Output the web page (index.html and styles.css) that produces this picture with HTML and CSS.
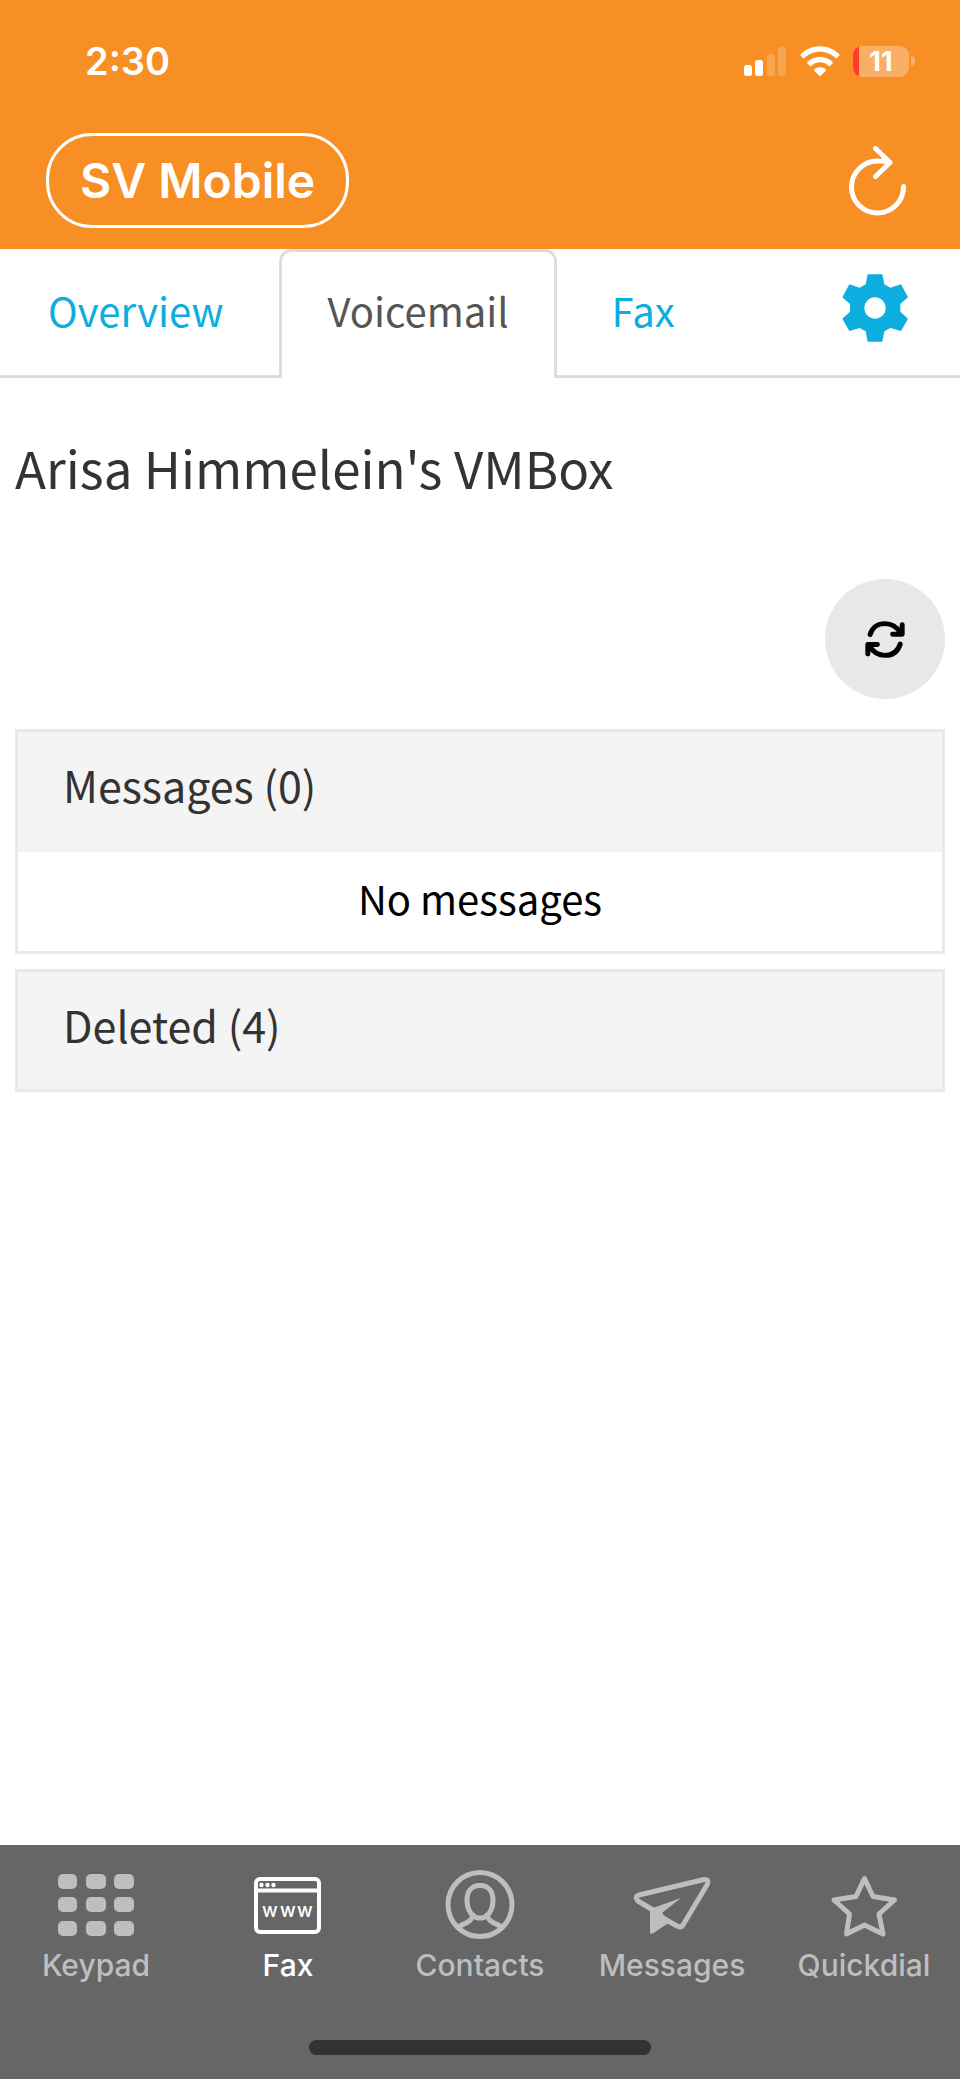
FILE: index.html
```html
<!DOCTYPE html>
<html lang="en">
<head>
<meta charset="utf-8">
<meta name="viewport" content="width=device-width, initial-scale=1">
<title>SV Mobile</title>
<link rel="stylesheet" href="styles.css">
</head>
<body>
<header class="top">
  <div class="status">
    <span class="clock">2:30</span>
    <div class="indicators">
      <svg class="signal" viewBox="0 0 43 30" aria-hidden="true">
        <rect x="0" y="19" width="8" height="11" rx="2.5"/>
        <rect x="11" y="14" width="8" height="16" rx="2.5"/>
        <rect class="dim" x="23" y="8" width="8" height="22" rx="2.5"/>
        <rect class="dim" x="34" y="1" width="8" height="29" rx="2.5"/>
      </svg>
      <svg class="wifi" viewBox="0 0 120 90" aria-hidden="true">
        <path d="M60 1C37 1 16 10 2 25Q0 27 2 29L9 36Q11 38 13 36C25 24 42 17 60 17S95 24 107 36Q109 38 111 36L118 29Q120 27 118 25C104 10 83 1 60 1Z"/>
        <path d="M60 33C45 33 32 38 22 48Q20 50 22 52L30 60Q32 62 34 60C41 53 50 49 60 49S79 53 86 60Q88 62 90 60L98 52Q100 50 98 48C88 38 75 33 60 33Z"/>
        <path d="M60 64C53 64 47 66 43 70Q41 72 43 74L58 89Q60 91 62 89L77 74Q79 72 77 70C73 66 67 64 60 64Z"/>
      </svg>
      <div class="battery"><span class="battery-body">11</span><span class="battery-cap"></span></div>
    </div>
  </div>
  <div class="titlebar">
    <button class="brand" type="button">SV Mobile</button>
    <button class="reload" type="button" aria-label="Reload">
      <svg viewBox="0 0 57 70" aria-hidden="true"><path d="M54.500 40.500A26 26 0 1 1 28.500 15Q36 15 41 16.500M26.500 2.500L41 16.500L26.500 30.500"/></svg>
    </button>
  </div>
</header>

<nav class="tabs">
  <a class="tab tab-first" href="#overview">Overview</a>
  <a class="tab tab-active" href="#voicemail" aria-current="page">Voicemail</a>
  <a class="tab tab-last" href="#fax">Fax</a>
  <div class="tab-tools">
    <button class="gear" type="button" aria-label="Settings">
      <svg viewBox="0 0 198 204" aria-hidden="true"><path fill-rule="evenodd" d="M77 1H121L127 31L145 41L177 31L198 70L175 90V113L198 134L177 171L145 162L127 172L121 203H77L71 172L53 162L22 171L1 134L24 113V90L1 70L22 31L53 41L71 31ZM99 70A32 32 0 1 0 99 134A32 32 0 1 0 99 70Z"/></svg>
    </button>
  </div>
</nav>

<main class="content">
  <h1 class="box-name">Arisa Himmelein's VMBox</h1>
  <div class="actions">
    <button class="sync" type="button" aria-label="Refresh messages">
      <svg viewBox="0 0 120 112" aria-hidden="true">
        <path class="line" d="M15 41C21 20 38 8 60 8C82 8 97 20 107 36M112 11V40H83M106 70C99 92 82 104 60 104C38 104 23 92 13 76M8 100V71H37"/>
        <path d="M112 18V40H90ZM8 93V71H30Z"/>
      </svg>
    </button>
  </div>
  <section class="panel">
    <h2 class="panel-title"><button class="panel-toggle" type="button" aria-expanded="true">Messages (0)</button></h2>
    <p class="panel-body">No messages</p>
  </section>
  <section class="panel">
    <h2 class="panel-title"><button class="panel-toggle" type="button" aria-expanded="false">Deleted (4)</button></h2>
  </section>
</main>

<footer class="bottom">
  <nav class="dock">
    <a class="dock-item" href="#keypad">
      <svg class="dock-icon" viewBox="0 0 78 70" aria-hidden="true">
        <rect x="1" y="5" width="19" height="15" rx="5"/><rect x="29" y="5" width="20" height="15" rx="5"/><rect x="57" y="5" width="20" height="15" rx="5"/>
        <rect x="1" y="28" width="19" height="15" rx="5"/><rect x="29" y="28" width="20" height="15" rx="5"/><rect x="57" y="28" width="20" height="15" rx="5"/>
        <rect x="1" y="52" width="19" height="15" rx="5"/><rect x="29" y="52" width="20" height="15" rx="5"/><rect x="57" y="52" width="20" height="15" rx="5"/>
      </svg>
      Keypad
    </a>
    <a class="dock-item dock-current" href="#fax" aria-current="page">
      <svg class="dock-icon" viewBox="0 0 78 70" aria-hidden="true">
        <rect class="line thin" x="7" y="10" width="63" height="53" rx="4"/>
        <path class="line thin" d="M7 21.500H70"/>
        <circle cx="12.500" cy="16" r="2.200"/><circle cx="18.500" cy="16" r="2.200"/><circle cx="24.500" cy="16" r="2.200"/>
        <text class="www" x="21 39 56" y="48">www</text>
      </svg>
      Fax
    </a>
    <a class="dock-item" href="#contacts">
      <svg class="dock-icon" viewBox="0 0 78 70" aria-hidden="true">
        <circle class="line" cx="39" cy="35.500" r="32"/>
        <path class="line" d="M39 16.500C30 16.500 26 23 26 31C26 41 31 49 39 49S52 41 52 31C52 23 48 16.500 39 16.500ZM32 46C31 53 24 54 17 58M46 46C47 53 54 54 61 58"/>
      </svg>
      Contacts
    </a>
    <a class="dock-item" href="#messages">
      <svg class="dock-icon" viewBox="0 0 78 70" aria-hidden="true">
        <path class="line" d="M20 41L5 32Q1 28 6 26L71 10.500Q76 10 74.500 15L50 56Q48 59 44 57L30 49"/>
        <path d="M17 40L48 29L29 44L37 53L19 65Q17 65 17 63Z"/>
      </svg>
      Messages
    </a>
    <a class="dock-item" href="#quickdial">
      <svg class="dock-icon" viewBox="0 0 78 70" aria-hidden="true">
        <path class="line" d="M39.500 9.500L48 27.500L69.500 31L54 45L58 65L39.500 56L21.500 65L24.500 45L9 31L31 27.500Z"/>
      </svg>
      Quickdial
    </a>
  </nav>
  <div class="home-bar"></div>
</footer>
</body>
</html>
```
FILE: styles.css
```css
* {
  box-sizing: border-box;
}

body {
  margin: 0;
  min-height: 100vh;
  display: flex;
  flex-direction: column;
  background: #fff;
  font-family: "Noto Sans CJK SC", "Noto Sans", sans-serif;
  font-size: 40px;
}

button {
  margin: 0;
  padding: 0;
  border: 0;
  background: none;
  font: inherit;
  color: inherit;
}

svg {
  display: block;
  fill: currentColor;
}

a {
  text-decoration: none;
}

.line {
  fill: none;
  stroke: currentColor;
  stroke-width: 5;
  stroke-linecap: round;
  stroke-linejoin: round;
}

.thin {
  stroke-width: 4;
}

/* Orange header */
.top {
  padding: 36px 45px 21px 46px;
  background: #f78f24;
  color: #fff;
  font-family: Inter, sans-serif;
  font-weight: 600;
}

.status {
  display: flex;
  align-items: center;
  justify-content: space-between;
  height: 50px;
  padding-left: 39px;
  font-size: 38px;
}

.indicators {
  display: flex;
  align-items: center;
  gap: 13px;
}

.signal {
  width: 43px;
  height: 30px;
}

.dim {
  opacity: 0.2;
}

.wifi {
  width: 40px;
  height: 30px;
}

.battery {
  display: flex;
  align-items: center;
  gap: 2px;
}

.battery-body {
  width: 56px;
  height: 31px;
  border-radius: 9px;
  background: linear-gradient(to right, #ff3b30 6px, #fab064 6px);
  font-size: 27px;
  font-weight: 700;
  line-height: 31px;
  text-align: center;
}

.battery-cap {
  width: 4px;
  height: 10px;
  border-radius: 0 4px 4px 0;
  background: #fab064;
}

.titlebar {
  display: flex;
  align-items: center;
  justify-content: space-between;
  margin-top: 47px;
  padding-right: 9px;
}

.brand {
  height: 95px;
  padding: 0 31px;
  border: 3px solid #fff;
  border-radius: 46px;
  font-size: 48px;
}

.reload svg {
  width: 57px;
  height: 70px;
  fill: none;
  stroke: currentColor;
  stroke-width: 5;
  stroke-linecap: round;
  stroke-linejoin: round;
}

/* Tabs */
.tabs {
  display: flex;
  height: 129px;
}

.tab {
  padding: 32px 45px 0 55px;
  border-bottom: 3px solid #ddd;
  line-height: 58px;
  color: #0caee0;
}

.tab-first {
  padding: 32px 56px 0 48px;
}

.tab-active {
  padding: 29px 45px 0;
  border: 3px solid #ddd;
  border-bottom: 0;
  border-radius: 12px 12px 0 0;
  color: #555;
}

.tab-tools {
  flex: 1;
  display: flex;
  align-items: center;
  justify-content: flex-end;
  padding: 0 52px 9px 0;
  border-bottom: 3px solid #ddd;
}

.gear {
  color: #0caee0;
}

.gear svg {
  width: 66px;
  height: 68px;
}

/* Voicemail box */
.content {
  flex: 1;
  padding: 49px 15px;
}

.box-name {
  margin: 0;
  font-size: 51px;
  font-weight: 400;
  line-height: 80px;
  color: #333;
}

.actions {
  display: flex;
  justify-content: flex-end;
  margin: 72px 0 30px;
}

.sync {
  display: grid;
  place-items: center;
  width: 120px;
  height: 120px;
  border-radius: 50%;
  background: #e8e8e8;
  color: #000;
}

.sync svg {
  width: 40px;
  height: 37px;
}

.sync .line {
  stroke-width: 15;
}

.panel {
  margin-bottom: 15px;
  border: 3px solid #e9e9e9;
}

.panel-title {
  margin: 0;
  font-size: 43px;
  font-weight: 400;
  color: #333;
}

.panel-toggle {
  display: block;
  width: 100%;
  padding: 20px 45px 33px;
  background: #f4f4f4;
  line-height: 64px;
  text-align: left;
}

.panel-body {
  margin: 0;
  padding: 13px 16px 19px;
  border-top: 3px solid #f2f2f2;
  line-height: 67px;
  text-align: center;
  color: #000;
}

/* Bottom navigation */
.bottom {
  padding: 24px 0;
  background: #666;
}

.dock {
  display: grid;
  grid-template-columns: repeat(5, 1fr);
}

.dock-item {
  display: flex;
  flex-direction: column;
  align-items: center;
  gap: 8px;
  font-family: Inter, sans-serif;
  font-size: 30px;
  font-weight: 500;
  line-height: 36px;
  color: #bebebe;
}

.dock-current {
  color: #fff;
}

.dock-icon {
  width: 78px;
  height: 70px;
}

.www {
  font-family: Inter, sans-serif;
  font-size: 19px;
  font-weight: 500;
  text-anchor: middle;
}

.home-bar {
  width: 342px;
  height: 15px;
  margin: 57px auto 0;
  border-radius: 8px;
  background: #323232;
}
```
